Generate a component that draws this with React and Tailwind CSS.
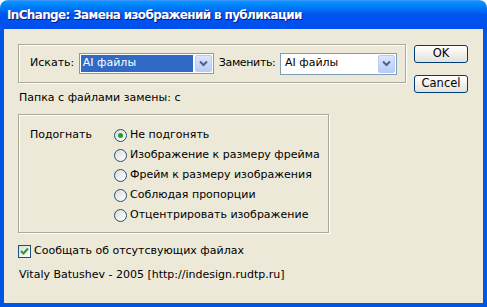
import React from "react";

function Chevron() {
  return (
    <svg width="9" height="7" viewBox="0 0 9 7">
      <path d="M1 1.5 L4.5 5 L8 1.5" fill="none" stroke="#4D6185" strokeWidth="2" />
    </svg>
  );
}

function DropBtn() {
  return (
    <div className="w-[17px] self-stretch m-px rounded-[2px] border border-[#B9CBF3] bg-gradient-to-b from-[#DCE6FC] to-[#B6CCF8] flex items-center justify-center">
      <Chevron />
    </div>
  );
}

function Radio({ checked, label }) {
  return (
    <div className="flex items-center h-[20px] whitespace-nowrap">
      <div className="w-[13px] h-[13px] shrink-0 rounded-full border border-[#1C5180] bg-gradient-to-br from-[#DCDCD6] to-white flex items-center justify-center">
        {checked && <div className="w-[5px] h-[5px] rounded-full bg-[#21A121]" />}
      </div>
      <span className="ml-[3px]">{label}</span>
    </div>
  );
}

function Button({ children }) {
  return (
    <div className="w-[54px] h-[18px] shrink-0 rounded-[3px] border border-[#003C74] bg-gradient-to-b from-white to-[#E3E2DB] flex items-center justify-center text-black text-[11.5px]">
      {children}
    </div>
  );
}

export default function App() {
  return (
    <div className="w-[487px] h-[307px] bg-white">
      <div className="w-[487px] h-[307px] flex flex-col rounded-t-[8px] overflow-hidden font-['DejaVu_Sans',sans-serif] text-[11px] text-black">
        <div className="h-[29px] shrink-0 bg-gradient-to-b from-[#0997FF] via-[#0053EE] to-[#0050EE] flex items-center pl-[7px] border-t border-[#3D95FF]">
          <span className="text-white font-bold text-[12px] [text-shadow:1px_1px_0_#0A1883] tracking-[-0.65px] whitespace-nowrap">
            InChange: Замена изображений в публикации
          </span>
        </div>
        <div className="flex-1 flex bg-[#0055E5] px-[4px] pb-[4px]">
          <div className="flex-1 bg-[#ECE9D8] flex flex-col pl-[14px] pt-[15px] whitespace-nowrap">
            <div className="flex h-[39px]">
              <div className="w-[388px] h-[39px] border border-[#ACA899] shadow-[inset_1px_1px_0_white,1px_1px_0_white] flex items-center pl-[11px] pr-[8px]">
                <span>Искать:</span>
                <div className="ml-auto w-[135px] h-[21px] border border-[#7F9DB9] bg-white flex items-stretch">
                  <div className="flex-1 m-px bg-[#316AC5] text-white flex items-center pl-[2px]">AI файлы</div>
                  <DropBtn />
                </div>
                <span className="ml-[5px] tracking-[-0.35px]">Заменить:</span>
                <div className="ml-auto w-[117px] h-[22px] border border-[#7F9DB9] bg-white flex items-stretch">
                  <div className="flex-1 flex items-center pl-[4px]">AI файлы</div>
                  <DropBtn />
                </div>
              </div>
              <div className="ml-[8px] mt-[1px] h-[38px] flex flex-col gap-[12px]">
                <Button>OK</Button>
                <Button>Cancel</Button>
              </div>
            </div>
            <div className="mt-[8px] pl-[1px] h-[14px] flex items-center">Папка с файлами замены: с</div>
            <div className="mt-[9px] w-[311px] h-[119px] shrink-0 border border-[#ACA899] shadow-[inset_1px_1px_0_white,1px_1px_0_white] flex pl-[11px] pt-[10px]">
              <span className="w-[84px] shrink-0 h-[20px] flex items-center">Подогнать</span>
              <div className="flex flex-col">
                <Radio checked label="Не подгонять" />
                <Radio label="Изображение к размеру фрейма" />
                <Radio label="Фрейм к размеру изображения" />
                <Radio label="Соблюдая пропорции" />
                <Radio label="Отцентрировать изображение" />
              </div>
            </div>
            <div className="mt-[11px] flex items-center h-[14px]">
              <div className="w-[13px] h-[13px] border border-[#1C5180] bg-gradient-to-br from-[#DCDCD6] to-white flex items-center justify-center">
                <svg width="9" height="9" viewBox="0 0 9 9">
                  <path d="M1 4 L3.5 6.5 L8 1.5" fill="none" stroke="#21A121" strokeWidth="2" />
                </svg>
              </div>
              <span className="ml-[3px]">Сообщать об отсутсвующих файлах</span>
            </div>
            <div className="mt-[10px] pl-[1px] h-[14px] flex items-center">Vitaly Batushev - 2005 [http://indesign.rudtp.ru]</div>
          </div>
        </div>
      </div>
    </div>
  );
}
